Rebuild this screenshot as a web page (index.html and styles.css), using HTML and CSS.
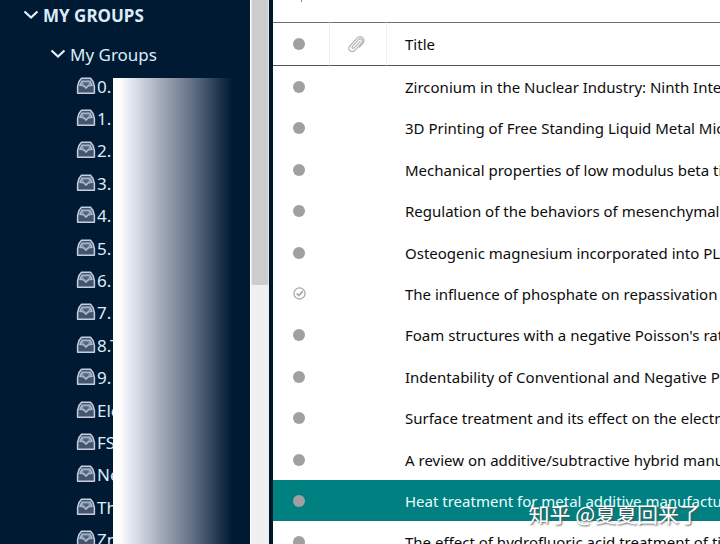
FILE: index.html
```html
<!DOCTYPE html>
<html lang="en">
<head>
<meta charset="utf-8">
<title>My Groups</title>
<link rel="stylesheet" href="styles.css">
</head>
<body>
<svg class="defs" aria-hidden="true">
  <symbol id="tray" viewBox="0 0 20 18">
    <path d="M5.500 1.300h9L17 4.500l1.400 5v6.700H1.600V9.500L3 4.500z" fill="#44566e" stroke="#c3cede" stroke-width="1.500" stroke-linejoin="round"/>
    <path d="M3.800 8.500 6 4h8l2.200 4.500-3.700.3L10 11.300 7.500 8.800z" fill="#8c9bb0" stroke="#b4c1d2" stroke-width="1.200" stroke-linejoin="round"/>
    <path d="M7 5.500h6l-.8 2L10 9.300 7.800 7.500z" fill="#52647c"/>
  </symbol>
  <symbol id="chevron" viewBox="0 0 16 10">
    <path d="M1.500 1.500 8 7.500l6.500-6" fill="none" stroke="#e4f1fa" stroke-width="2.200"/>
  </symbol>
</svg>
<div class="app">
  <nav class="sidebar">
    <button class="heading"><svg class="chevron"><use href="#chevron"/></svg>MY GROUPS</button>
    <button class="subheading"><svg class="chevron"><use href="#chevron"/></svg>My Groups</button>
    <ul class="groups">
      <li><a href="#"><svg class="tray"><use href="#tray"/></svg>0.</a></li>
      <li><a href="#"><svg class="tray"><use href="#tray"/></svg>1.</a></li>
      <li><a href="#"><svg class="tray"><use href="#tray"/></svg>2.</a></li>
      <li><a href="#"><svg class="tray"><use href="#tray"/></svg>3.</a></li>
      <li><a href="#"><svg class="tray"><use href="#tray"/></svg>4.</a></li>
      <li><a href="#"><svg class="tray"><use href="#tray"/></svg>5.</a></li>
      <li><a href="#"><svg class="tray"><use href="#tray"/></svg>6.</a></li>
      <li><a href="#"><svg class="tray"><use href="#tray"/></svg>7.</a></li>
      <li><a href="#"><svg class="tray"><use href="#tray"/></svg>8.T</a></li>
      <li><a href="#"><svg class="tray"><use href="#tray"/></svg>9.</a></li>
      <li><a href="#"><svg class="tray"><use href="#tray"/></svg>Ele</a></li>
      <li><a href="#"><svg class="tray"><use href="#tray"/></svg>FS</a></li>
      <li><a href="#"><svg class="tray"><use href="#tray"/></svg>Ne</a></li>
      <li><a href="#"><svg class="tray"><use href="#tray"/></svg>Th</a></li>
      <li><a href="#"><svg class="tray"><use href="#tray"/></svg>Zn</a></li>
    </ul>
    <div class="mask"></div>
  </nav>
  <div class="scrollbar"><div class="thumb"></div></div>
  <main class="library">
    <div class="toolbar"><span class="tick"></span></div>
    <table>
      <thead>
        <tr>
          <th class="status"><span class="dot"></span></th>
          <th class="clip"><svg width="20" height="20" viewBox="0 0 20 20" fill="none" stroke="#b6b6b6" stroke-width="1.200" stroke-linecap="round"><path d="M14.300 7.300 8.200 13.800c-1.300 1.200-2.900-.2-1.800-1.500L12.200 5.800c2.400-2.500 5.800.4 3.600 3L8.900 16.300c-3.400 3.200-8-.6-5-4.300L11 4.200c3.500-3.600 9.200.7 6 5l-3.500 4"/></svg></th>
          <th class="title">Title</th>
        </tr>
      </thead>
      <tbody>
        <tr><td class="status"><span class="dot"></span></td><td></td><td class="title">Zirconium in the Nuclear Industry: Ninth International</td></tr>
        <tr><td class="status"><span class="dot"></span></td><td></td><td class="title">3D Printing of Free Standing Liquid Metal Microstructures</td></tr>
        <tr><td class="status"><span class="dot"></span></td><td></td><td class="title">Mechanical properties of low modulus beta titanium</td></tr>
        <tr><td class="status"><span class="dot"></span></td><td></td><td class="title">Regulation of the behaviors of mesenchymal stem cells</td></tr>
        <tr><td class="status"><span class="dot"></span></td><td></td><td class="title">Osteogenic magnesium incorporated into PLGA</td></tr>
        <tr><td class="status"><svg class="check" viewBox="0 0 14 14" fill="none" stroke="#a5a5a5"><circle cx="7" cy="7" r="6" stroke-width="1.300"/><path d="m4 7 2.200 2.300L10.500 4.500" stroke-width="1.800"/></svg></td><td></td><td class="title">The influence of phosphate on repassivation of</td></tr>
        <tr><td class="status"><span class="dot"></span></td><td></td><td class="title">Foam structures with a negative Poisson's ratio</td></tr>
        <tr><td class="status"><span class="dot"></span></td><td></td><td class="title">Indentability of Conventional and Negative Poisson's</td></tr>
        <tr><td class="status"><span class="dot"></span></td><td></td><td class="title">Surface treatment and its effect on the electrochemical</td></tr>
        <tr><td class="status"><span class="dot"></span></td><td></td><td class="title">A review on additive/subtractive hybrid manufacturing</td></tr>
        <tr class="selected"><td class="status"><span class="dot"></span></td><td></td><td class="title">Heat treatment for metal additive manufacturing</td></tr>
        <tr><td class="status"><span class="dot"></span></td><td></td><td class="title">The effect of hydrofluoric acid treatment of titanium</td></tr>
      </tbody>
    </table>
  </main>
  <div class="watermark" lang="zh">知乎 @夏夏回来了</div>
</div>
</body>
</html>
```
FILE: styles.css
```css
* { box-sizing: border-box; }
body {
  margin: 0;
  overflow: hidden;
  font-family: "Noto Sans", "Noto Sans CJK SC", sans-serif;
  font-size: 15px;
  color: #0c0c0c;
}
.defs { position: absolute; width: 0; height: 0; }
.app { position: relative; display: flex; height: 100vh; overflow: hidden; background: #fff; }
.sidebar {
  position: relative;
  flex: 0 0 250px;
  overflow: hidden;
  background: #001a33;
  color: #dcecf8;
}
.sidebar button {
  display: flex;
  align-items: center;
  gap: 4px;
  width: 100%;
  border: 0;
  background: none;
  color: inherit;
  font-family: inherit;
  font-size: 17px;
}
.sidebar .heading { height: 30px; padding: 0 0 0 23px; font-weight: 700; }
.sidebar .subheading { height: 40px; margin-top: 4px; padding: 0 0 0 50px; }
.chevron { width: 16px; height: 10px; }
.groups { margin: 0; padding: 0; list-style: none; line-height: 24px; }
.groups li { height: 32px; }
.groups li:nth-child(5n+3), .groups li:nth-child(5n) { height: 33px; }
.groups a {
  display: flex;
  align-items: center;
  gap: 1px;
  height: 25px;
  padding-left: 76px;
  color: inherit;
  font-size: 17px;
  text-decoration: none;
  white-space: nowrap;
}
.tray { width: 20px; height: 18px; margin-bottom: 1px; }
.mask {
  position: absolute;
  top: 78px;
  bottom: 0;
  left: 113px;
  width: 120px;
  background: linear-gradient(90deg, #fff 5%, #e6e9f1 14%, #9ba4b2 43%, #56677c 70%, #1b3048 90%, #001a33);
}
.scrollbar {
  flex: 0 0 23px;
  border-left: 1px solid #fff;
  border-right: 4px solid #001727;
  background: #f0f0f0;
}
.thumb { height: 285px; background: #cdcdcd; border: solid #e3e6ea; border-width: 0 1px; }
.library { flex: 1; min-width: 0; overflow: hidden; }
.toolbar { height: 22px; padding-left: 28px; }
.tick { display: block; width: 1px; height: 2px; background: #888; }
table { width: 100%; table-layout: fixed; border-collapse: separate; border-spacing: 0; }
th, td { padding: 0; font-weight: 400; text-align: left; vertical-align: middle; white-space: nowrap; }
thead th { height: 44px; border-top: 1px solid #6c6e71; border-bottom: 1px solid #525459; }
th.status, th.clip { border-right: 1px solid #f0f0f0; }
th.status { width: 57px; }
th.clip { width: 57px; }
th.clip svg { display: block; margin: 0 16px; }
.status { padding-left: 20px; }
.title { padding-left: 18px; }
td.title { overflow: hidden; }
tbody tr { height: 41px; }
tbody tr:nth-child(5n+2), tbody tr:nth-child(5n+4) { height: 42px; }
tbody td { line-height: 22px; }
.dot { display: block; width: 12px; height: 12px; border-radius: 50%; background: #a0a0a0; }
.check { display: block; width: 13px; height: 13px; }
.selected { background: #008080; color: #e9ffff; }
.watermark {
  position: absolute;
  right: 20px;
  bottom: 17px;
  color: #fff;
  font-family: "Noto Sans CJK SC", sans-serif;
  font-size: 21px;
  line-height: 28px;
  text-shadow: 1px 1px 2px #555;
}
```
